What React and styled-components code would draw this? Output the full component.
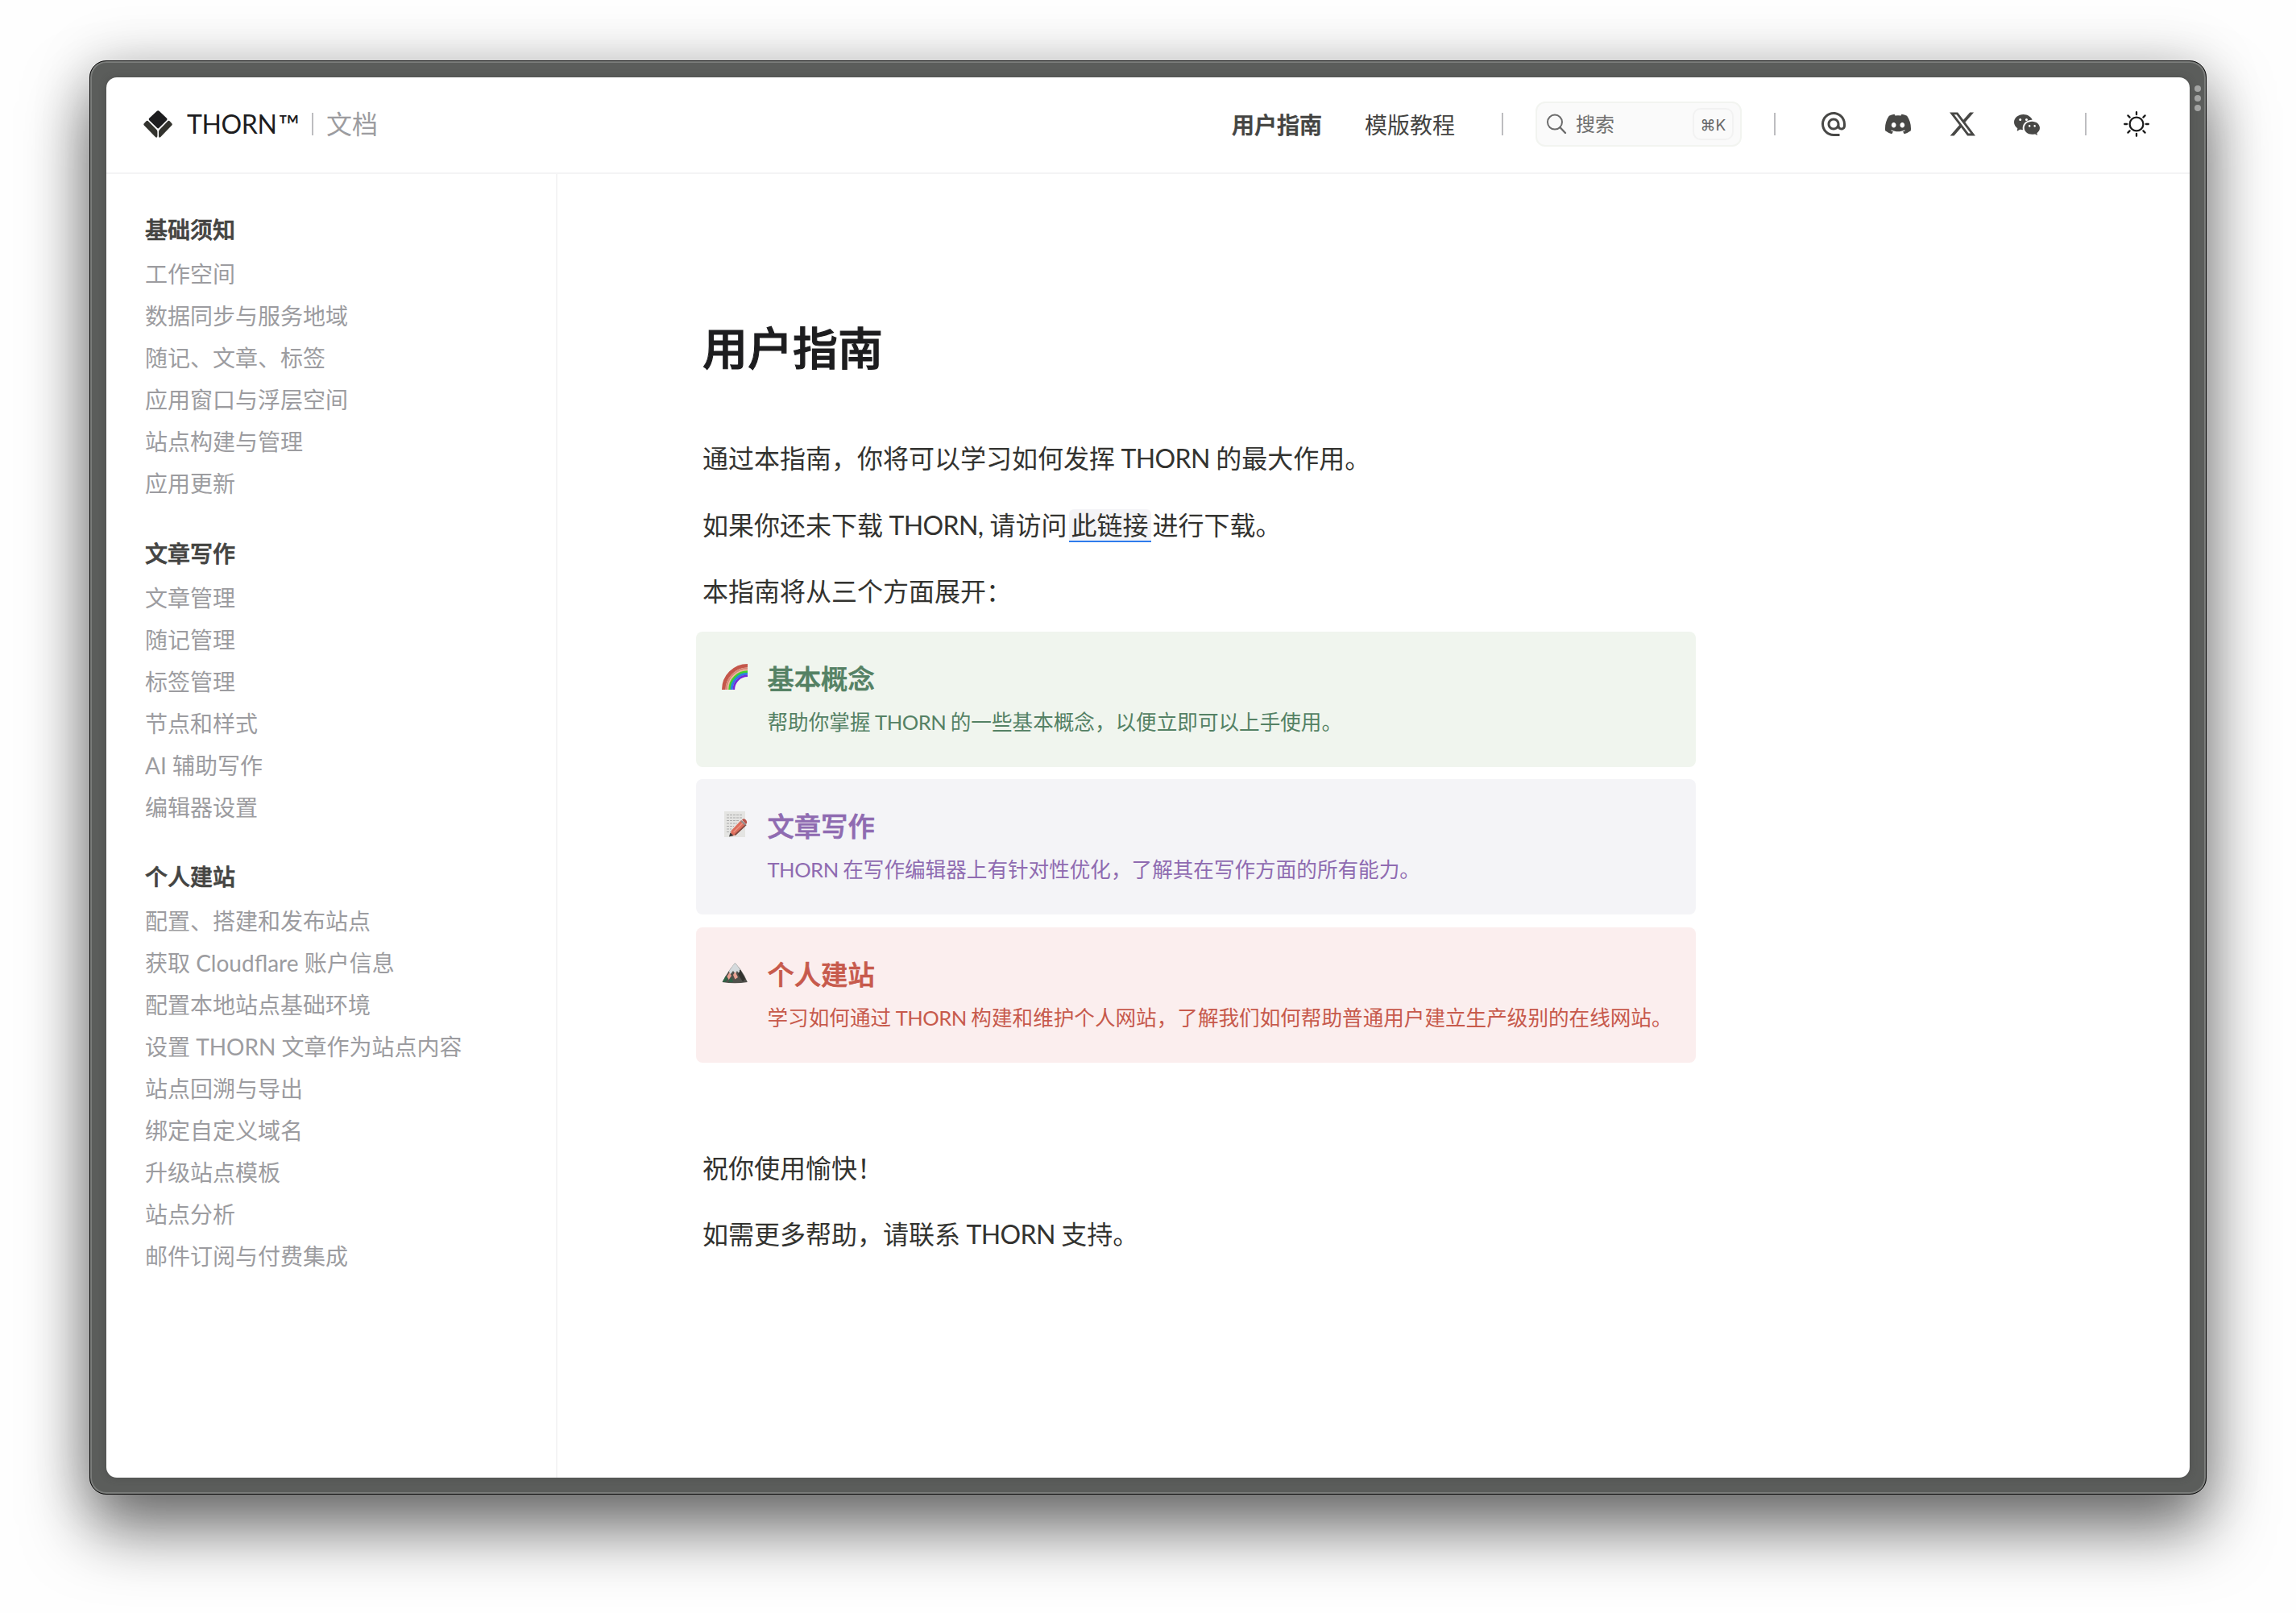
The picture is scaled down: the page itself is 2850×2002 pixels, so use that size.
import React from "react";
import styled, { createGlobalStyle } from "styled-components";
import { MdAlternateEmail } from "react-icons/md";
import { BsTwitterX, BsWechat, BsDiscord } from "react-icons/bs";

const Word = styled.span`
  letter-spacing: -0.02em;
`;

const sections = [
  {
    title: "基础须知",
    items: [
      "工作空间",
      "数据同步与服务地域",
      "随记、文章、标签",
      "应用窗口与浮层空间",
      "站点构建与管理",
      "应用更新",
    ],
  },
  {
    title: "文章写作",
    items: [
      "文章管理",
      "随记管理",
      "标签管理",
      "节点和样式",
      "AI 辅助写作",
      "编辑器设置",
    ],
  },
  {
    title: "个人建站",
    items: [
      "配置、搭建和发布站点",
      "获取 Cloudflare 账户信息",
      "配置本地站点基础环境",
      "设置 THORN 文章作为站点内容",
      "站点回溯与导出",
      "绑定自定义域名",
      "升级站点模板",
      "站点分析",
      "邮件订阅与付费集成",
    ],
  },
];

const Logo = () => (
  <svg width="36" height="34" viewBox="0 0 36 34">
    <path
      d="M16.6 1Q18.2 -.5 19.8 1L29 9.8Q30 11 29 12.2L19.4 21.8Q18.2 23 17 21.8L7.2 12.2Q6.2 11 7.2 9.8Z"
      fill="#1d1d1f"
    />
    <path
      d="M5.6 13Q4.6 12.2 3.6 13.2L.8 16.2Q-.2 17.4 .8 18.6L14.6 32.8Q17.4 35.2 17.4 31.6V26.6Q17.4 25 16.2 23.8Z"
      fill="#33332e"
    />
    <path
      d="M30.6 13Q31.6 12.2 32.6 13.2L35.3 16.2Q36.3 17.4 35.3 18.6L21.6 32.8Q19 35.2 19 31.6V26.6Q19 25 20.2 23.8Z"
      fill="#33332e"
    />
  </svg>
);

const SearchIcon = () => (
  <svg width="26" height="26" viewBox="0 0 26 26" fill="none">
    <circle cx="11" cy="10.6" r="9" stroke="#6b6b6b" strokeWidth="2" />
    <path d="M17.4 17L24 24" stroke="#6b6b6b" strokeWidth="2.4" strokeLinecap="round" />
  </svg>
);

const SunIcon = () => (
  <svg
    width="32"
    height="32"
    viewBox="0 0 32 32"
    fill="none"
    stroke="#1b1b1b"
    strokeWidth="2.3"
    strokeLinecap="round"
  >
    <circle cx="16" cy="16" r="8.4" />
    <path d="M16 1.2V4.2M16 27.8V30.8M1.2 16H4.2M27.8 16H30.8M5.4 5.4L7.6 7.6M24.4 24.4L26.6 26.6M5.4 26.6L7.6 24.4M24.4 7.6L26.6 5.4" />
  </svg>
);

const Rainbow = () => (
  <svg width="32" height="32" viewBox="0 0 32 32" fill="none">
    <path d="M2.3 32A29.7 29.7 0 0 1 32 2.3" stroke="#c4564a" strokeWidth="4.6" />
    <path d="M5.7 32A26.3 26.3 0 0 1 32 5.7" stroke="#d98a78" strokeWidth="2.6" />
    <path d="M8 32A24 24 0 0 1 32 8" stroke="#eeb49a" strokeWidth="2" />
    <path d="M9.8 32A22.2 22.2 0 0 1 32 9.8" stroke="#3ed12c" strokeWidth="3" />
    <path d="M12.2 32A19.8 19.8 0 0 1 32 12.2" stroke="#2f7de0" strokeWidth="3" />
    <path d="M14.8 32A17.2 17.2 0 0 1 32 14.8" stroke="#7428d8" strokeWidth="2.6" />
  </svg>
);

const Memo = () => (
  <svg width="32" height="32" viewBox="0 0 32 32" fill="none">
    <path d="M3 0H29V32H3Z" fill="#e4e4e2" />
    <path
      d="M6 4.5H26M6 8H25M6 11.5H22M6 15H19M6 18.5H15M6 22H12M6 25.5H11"
      stroke="#ababab"
      strokeWidth="1"
      strokeDasharray="3 1"
    />
    <path d="M10.5 31L11.6 24L24 11L30.4 16.6L17 29.4Z" fill="#dc6e5c" />
    <path d="M16.4 29.4L30 16.6" stroke="#7c4840" strokeWidth="1.6" />
    <path d="M14.6 26L27 13.6" stroke="#eb9484" strokeWidth="1.4" />
    <path d="M9 31.4L10.4 26.4L14.6 30Z" fill="#3c3c3c" />
    <path d="M25 10.6L26.6 9.2Q28 8.8 29.8 10.6T31 14.4L30 16Z" fill="#b9544a" />
    <path d="M24 11.8L29.6 17" stroke="#8d8d8d" strokeWidth="1.8" />
  </svg>
);

const Mountain = () => (
  <svg width="32" height="32" viewBox="0 0 32 32">
    <path d="M.5 28L5 20L9.5 13L16.4 4L23 12L28 20L31.8 28Q16 30.5 .5 28Z" fill="#50504b" />
    <path d="M16.4 4L23 12.6L21.8 13L23 19L18.8 14L17 18L14 14L10 19L9 14Z" fill="#d5dadd" />
    <path d="M9.4 16L12 20L8.6 25L6.4 21ZM16.6 15L20 22L16.4 24.6L14 19Z" fill="#e8a293" />
    <path d="M5 20L8 24.6L4 28L.8 27.4ZM12 22L14 28H8Z" fill="#2f6245" />
    <path d="M23 13L29 24L26 27.6L20 18Z" fill="#33332f" />
  </svg>
);

const cards = [
  {
    tone: "green",
    icon: <Rainbow />,
    title: "基本概念",
    desc: (
      <>
        帮助你掌握 <Word>THORN</Word> 的一些基本概念，以便立即可以上手使用。
      </>
    ),
  },
  {
    tone: "purple",
    icon: <Memo />,
    title: "文章写作",
    desc: (
      <>
        <Word>THORN</Word> 在写作编辑器上有针对性优化，了解其在写作方面的所有能力。
      </>
    ),
  },
  {
    tone: "red",
    icon: <Mountain />,
    title: "个人建站",
    desc: (
      <>
        学习如何通过 <Word>THORN</Word>{" "}
        构建和维护个人网站，了解我们如何帮助普通用户建立生产级别的在线网站。
      </>
    ),
  },
];

const App = () => {
  return (
    <React.Fragment>
      <GlobalStyle />
      <Desktop>
        <Frame>
          <Grip>
            <Dot />
            <Dot />
            <Dot />
          </Grip>
          <Page>
            <Header>
              <Brand>
                <Logo />
                <BrandName>
                  THORN<Mark>™</Mark>
                </BrandName>
                <Divider />
                <BrandSub>文档</BrandSub>
              </Brand>
              <Nav>
                <NavLink $active>用户指南</NavLink>
                <NavLink>模版教程</NavLink>
              </Nav>
              <Divider />
              <Search>
                <SearchIcon />
                <SearchText>搜索</SearchText>
                <Kbd>⌘K</Kbd>
              </Search>
              <Divider />
              <Socials>
                <MdAlternateEmail size={36} />
                <BsDiscord size={32} />
                <BsTwitterX size={32} />
                <BsWechat size={32} />
              </Socials>
              <Divider />
              <ThemeButton>
                <SunIcon />
              </ThemeButton>
            </Header>
            <Body>
              <Sidebar>
                {sections.map((section) => (
                  <Section key={section.title}>
                    <SectionTitle>{section.title}</SectionTitle>
                    {section.items.map((item) => (
                      <SectionItem key={item}>{item}</SectionItem>
                    ))}
                  </Section>
                ))}
              </Sidebar>
              <Article>
                <Title>用户指南</Title>
                <Paragraph>
                  通过本指南，你将可以学习如何发挥 <Word>THORN</Word> 的最大作用。
                </Paragraph>
                <Paragraph>
                  如果你还未下载 <Word>THORN</Word>, 请访问<Link>此链接</Link>
                  进行下载。
                </Paragraph>
                <Paragraph>本指南将从三个方面展开：</Paragraph>
                <Cards>
                  {cards.map((card) => (
                    <Card key={card.title} $tone={card.tone}>
                      <CardIcon>{card.icon}</CardIcon>
                      <div>
                        <CardTitle>{card.title}</CardTitle>
                        <CardDesc>{card.desc}</CardDesc>
                      </div>
                    </Card>
                  ))}
                </Cards>
                <Paragraph>祝你使用愉快！</Paragraph>
                <Paragraph>
                  如需更多帮助，请联系 <Word>THORN</Word> 支持。
                </Paragraph>
              </Article>
            </Body>
          </Page>
        </Frame>
      </Desktop>
    </React.Fragment>
  );
};

const tones = {
  green: { bg: "#f0f5ee", color: "#548164" },
  purple: { bg: "#f4f4f7", color: "#8f6bb1" },
  red: { bg: "#fbeeee", color: "#c75a4c" },
};

const GlobalStyle = createGlobalStyle`
  * {
    box-sizing: border-box;
  }

  body {
    margin: 0;
    background-color: #fefefe;
    font-family: Lato, "Noto Sans CJK SC", sans-serif;
  }

  svg {
    display: block;
    flex-shrink: 0;
  }
`;

const Desktop = styled.div`
  width: 2850px;
  height: 2002px;
  padding: 75px 111px 147px;
  overflow: hidden;
`;

const Frame = styled.div`
  position: relative;
  width: 2628px;
  height: 1780px;
  padding: 20px;
  border: 1px solid #050505;
  border-radius: 21px;
  background-color: #5b5d5b;
  box-shadow: inset 0 0 0 2px #7b7d7b, 0 44px 80px rgba(0, 0, 0, 0.54),
    0 0 70px rgba(0, 0, 0, 0.18);
`;

const Grip = styled.div`
  position: absolute;
  top: 30px;
  right: 6px;
  display: flex;
  flex-direction: column;
  gap: 4px;
`;

const Dot = styled.div`
  width: 8px;
  height: 8px;
  border-radius: 50%;
  background-color: #a3a4a3;
`;

const Page = styled.div`
  display: flex;
  flex-direction: column;
  height: 1738px;
  border-radius: 13px;
  background-color: #fff;
  box-shadow: 0 0 10px rgba(60, 60, 60, 0.4);
  overflow: hidden;
`;

const Header = styled.div`
  display: flex;
  align-items: center;
  height: 120px;
  padding: 0 50px 2px 46px;
  border-bottom: 2px solid #f4f4f5;
`;

const Divider = styled.div`
  width: 2px;
  height: 28px;
  background-color: #bdbdc0;
`;

const Brand = styled.div`
  display: flex;
  align-items: center;
  flex: 1;
`;

const BrandName = styled.div`
  display: flex;
  width: 155px;
  margin-left: 18px;
  color: #1d1d1f;
  font-size: 32px;
  line-height: 40px;
  letter-spacing: -0.4px;
`;

const Mark = styled.span`
  margin-left: 2px;
  font-size: 35px;
`;

const BrandSub = styled.div`
  margin-left: 16px;
  color: #9c9ca0;
  font-size: 32px;
  line-height: 40px;
`;

const Nav = styled.div`
  display: flex;
  gap: 53px;
  margin-right: 58px;
  padding-top: 2px;
`;

const NavLink = styled.a`
  color: #444442;
  font-size: 28px;
  font-weight: ${(props) => (props.$active ? 500 : 400)};
  line-height: 40px;
  -webkit-text-stroke: ${(props) => (props.$active ? "0.025em" : "0")};
`;

const Search = styled.div`
  display: flex;
  align-items: center;
  width: 256px;
  height: 56px;
  margin: 0 40px;
  padding: 0 8px 0 11px;
  border: 2px solid #f2f4f0;
  border-radius: 12px;
  background-color: #fafafa;
`;

const SearchText = styled.div`
  flex: 1;
  margin-left: 11px;
  color: #707070;
  font-size: 24px;
  line-height: 32px;
`;

const Kbd = styled.div`
  width: 51px;
  height: 40px;
  border: 2px solid #f2f2f2;
  border-radius: 10px;
  color: #666;
  font-family: Inter, "DejaVu Sans", sans-serif;
  font-size: 19px;
  line-height: 39px;
  text-align: center;
`;

const Socials = styled.div`
  display: flex;
  align-items: center;
  gap: 48px;
  margin: 0 56px 0 54px;
  color: #484846;

  svg:first-child {
    margin-right: -2px;
  }
`;

const ThemeButton = styled.div`
  margin-left: 46px;
`;

const Body = styled.div`
  display: flex;
  flex: 1;
`;

const Sidebar = styled.div`
  width: 560px;
  padding: 41px 48px;
  border-right: 2px solid #f4f4f5;
`;

const Section = styled.div`
  margin-bottom: 32.5px;
`;

const SectionTitle = styled.div`
  margin-bottom: 1px;
  color: #444442;
  font-size: 28px;
  font-weight: 500;
  line-height: 56px;
  -webkit-text-stroke: 0.025em;
`;

const SectionItem = styled.div`
  color: #9c9ca0;
  font-size: 28px;
  line-height: 52px;
`;

const Article = styled.div`
  padding: 176px 0 0 180px;
`;

const Title = styled.h1`
  margin: 0 0 71px;
  color: #1d1d1f;
  font-size: 56px;
  font-weight: 500;
  line-height: 80px;
  -webkit-text-stroke: 0.02em;
`;

const Paragraph = styled.p`
  margin: 0 0 31px;
  color: #333330;
  font-size: 32px;
  line-height: 51.6px;
  word-spacing: -0.7px;
`;

const Link = styled.a`
  margin: 0 2px;
  padding: 0 3px;
  border-bottom: 2px solid #2f7cec;
  border-radius: 6px 6px 0 0;
  background-color: #f4f4f7;
`;

const Cards = styled.div`
  display: flex;
  flex-direction: column;
  gap: 15.5px;
  width: 1241px;
  margin: -7px 0 105px -8px;
`;

const Card = styled.div`
  display: flex;
  height: 168px;
  padding: 32px;
  border-radius: 8px;
  background-color: ${(props) => tones[props.$tone].bg};
  color: ${(props) => tones[props.$tone].color};
`;

const CardIcon = styled.div`
  margin: 8px 24.5px 0 0;
`;

const CardTitle = styled.div`
  font-size: 33.3px;
  font-weight: 500;
  line-height: 52px;
  -webkit-text-stroke: 0.02em;
`;

const CardDesc = styled.div`
  margin-top: 2px;
  font-size: 25.6px;
  line-height: 52px;
  word-spacing: -1px;
  white-space: nowrap;
`;

export default App;
